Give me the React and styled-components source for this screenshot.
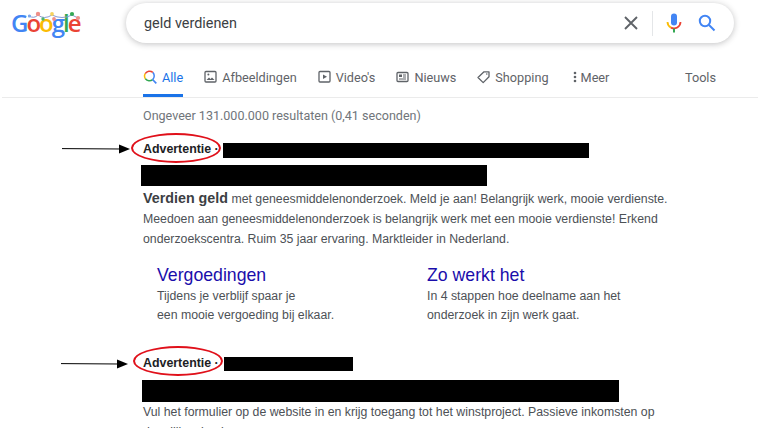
import React from "react";
import styled, { createGlobalStyle } from "styled-components";

const Global = createGlobalStyle`
  html, body { margin: 0; padding: 0; background: #fff; }
  body { font-family: "Liberation Sans", Arial, sans-serif; overflow: hidden; }
`;

const Page = styled.div`
  position: relative;
  width: 767px;
  height: 428px;
  overflow: hidden;
`;

const Header = styled.div`
  display: flex;
  align-items: flex-start;
  height: 65px;
  padding: 3px 0 0 12px;
  box-sizing: border-box;
`;

const LogoBox = styled.div`
  position: relative;
  width: 70px;
  height: 36px;
  margin-right: 44px;
  flex: none;
`;

const LogoText = styled.div`
  position: absolute;
  left: -1px;
  top: 5px;
  font-family: "Open Sans", sans-serif;
  font-size: 24px;
  line-height: 30px;
  font-weight: 600;
  letter-spacing: -2px;
  white-space: nowrap;
`;

const Letter = styled.span`
  color: ${(p) => p.$c};
`;

const Lights = styled.svg`
  position: absolute;
  left: 16px;
  top: 8px;
`;

const SearchBar = styled.div`
  display: flex;
  align-items: center;
  width: 608px;
  height: 40px;
  padding: 0 18px;
  box-sizing: border-box;
  border-radius: 20px;
  background: #fff;
  box-shadow: 0 1px 6px rgba(32, 33, 36, 0.28);
`;

const Query = styled.div`
  flex: 1;
  font-family: Roboto, sans-serif;
  font-size: 14.4px;
  color: #3c4043;
`;

const Sep = styled.div`
  width: 1px;
  height: 25px;
  margin: 0 13px 0 14px;
  background: #e4e6e8;
`;

const SearchIcon = styled.svg`
  margin-left: 16px;
`;

const Tabs = styled.div`
  display: flex;
  align-items: flex-start;
  height: 32px;
  margin: 0 9px 0 2px;
  padding-left: 141px;
  border-bottom: 1px solid #ebebeb;
  font-family: Roboto, sans-serif;
  font-size: 12.7px;
  color: #5f6368;
`;

const Tab = styled.div`
  display: flex;
  align-items: center;
  gap: ${(p) => p.$gap ?? 4}px;
  height: 32px;
  box-sizing: border-box;
  padding-top: 2px;
  padding-bottom: 7px;
  margin-right: ${(p) => p.$mr ?? 0}px;
  margin-left: ${(p) => (p.$end ? "auto" : "0")};
  color: ${(p) => (p.$active ? "#1a73e8" : "#5f6368")};
  border-bottom: 3px solid ${(p) => (p.$active ? "#1a73e8" : "transparent")};
  white-space: nowrap;
`;

const Content = styled.div`
  padding-left: 143px;
`;

const Stats = styled.div`
  margin-top: 9px;
  font-family: Roboto, sans-serif;
  font-size: 12.55px;
  line-height: 17px;
  color: #70757a;
`;

const AdRow = styled.div`
  display: flex;
  align-items: flex-start;
  height: ${(p) => p.$h}px;
  margin-top: ${(p) => p.$mt}px;
`;

const AdLabel = styled.div`
  width: ${(p) => p.$w}px;
  flex: none;
  font-size: 12.4px;
  line-height: 13px;
  font-weight: 700;
  color: #202124;
  white-space: nowrap;
`;

const Redact = styled.div`
  flex: none;
  width: ${(p) => p.$w}px;
  height: ${(p) => p.$h}px;
  margin-left: ${(p) => p.$ml ?? 0}px;
  background: #000;
`;

const Body = styled.div`
  margin-top: ${(p) => p.$mt ?? 0}px;
  width: 600px;
  font-size: 12.3px;
  line-height: 20px;
  color: #4d5156;
  white-space: nowrap;
  height: ${(p) => p.$h}px;
`;

const Strong = styled.b`
  font-size: 14.3px;
  color: #3c4043;
`;

const Sitelinks = styled.div`
  display: grid;
  grid-template-columns: 270px 270px;
  margin: 14px 0 0 14px;
  height: 82px;
`;

const SiteTitle = styled.div`
  font-size: 17.7px;
  line-height: 22px;
  color: #1a0dab;
`;

const SiteText = styled.div`
  margin-top: 1px;
  font-size: 12.3px;
  line-height: 19px;
  color: #4d5156;
  white-space: nowrap;
`;

const Ellipse = styled.div`
  position: absolute;
  left: ${(p) => p.$x}px;
  top: ${(p) => p.$y}px;
  width: 90px;
  height: 30px;
  box-sizing: border-box;
  border: 2.4px solid #e0101a;
  border-radius: 50%;
`;

const Arrow = styled.svg`
  position: absolute;
  left: ${(p) => p.$x}px;
  top: ${(p) => p.$y}px;
`;

const tabIcon = { width: 14, height: 14, viewBox: "0 0 14 14", fill: "none", stroke: "#5f6368", strokeWidth: 1.3 };

function PointerArrow({ x, y, w }) {
  return (
    <Arrow $x={x} $y={y} width={w} height="10" viewBox={`0 0 ${w} 10`}>
      <line x1="0" y1="4.6" x2={w - 8} y2="5" stroke="#000" strokeWidth="1" />
      <polygon points={`${w - 11},0.5 ${w},5 ${w - 11},9.5`} fill="#000" />
    </Arrow>
  );
}

export default function App() {
  return (
    <Page>
      <Global />
      <Header>
        <LogoBox>
          <LogoText>
            <Letter $c="#4285f4">G</Letter>
            <Letter $c="#ea4335">o</Letter>
            <Letter $c="#fbbc05">o</Letter>
            <Letter $c="#4285f4">g</Letter>
            <Letter $c="#34a853">l</Letter>
            <Letter $c="#ea4335">e</Letter>
          </LogoText>
          <Lights width="54" height="12" viewBox="0 0 54 12">
            <path d="M1 5 Q6 8 10 4 Q16 9 24 4 Q34 9 44 4 L50 7" fill="none" stroke="#8a9bd0" strokeWidth="1" />
            <circle cx="1.5" cy="5" r="1.6" fill="#7fa8ea" />
            <circle cx="10" cy="3" r="2.2" fill="#ef8f88" />
            <circle cx="15" cy="8" r="1.7" fill="#4fb56c" />
            <circle cx="24" cy="3" r="1.9" fill="#f6d25c" />
            <circle cx="26" cy="8" r="1.9" fill="#ef8f88" />
            <circle cx="44" cy="3" r="2.1" fill="#34a853" />
            <circle cx="50" cy="7" r="2.1" fill="#ef8f88" />
          </Lights>
        </LogoBox>
        <SearchBar>
          <Query>geld verdienen</Query>
          <svg width="14" height="14" viewBox="0 0 14 14" fill="none" stroke="#5f6368" strokeWidth="1.9">
            <path d="M1 1 L13 13 M13 1 L1 13" />
          </svg>
          <Sep />
          <svg width="16" height="20" viewBox="0 0 16 20" fill="none">
            <rect x="5" y="0.5" width="6" height="12" rx="3" fill="#4285f4" />
            <path d="M1.5 9 A6.5 6.5 0 0 0 5 14.6" stroke="#fbbc05" strokeWidth="1.8" />
            <path d="M5 14.6 A6.5 6.5 0 0 0 14.5 9" stroke="#ea4335" strokeWidth="1.8" />
            <rect x="7" y="15.5" width="2" height="4" fill="#34a853" />
          </svg>
          <SearchIcon width="18" height="18" viewBox="0 0 18 18" fill="none" stroke="#4285f4" strokeWidth="2">
            <circle cx="7" cy="7" r="5.2" />
            <path d="M11 11 L16.5 16.5" />
          </SearchIcon>
        </SearchBar>
      </Header>

      <Tabs>
        <Tab $active $mr={21} $gap={5}>
          <svg width="14" height="14" viewBox="0 0 14 14" fill="none" strokeWidth="1.5">
            <path d="M9.6 9.6 A5 5 0 0 0 9.8 2.4" stroke="#4285f4" />
            <path d="M9.8 2.4 A5 5 0 0 0 2.2 3.6" stroke="#ea4335" />
            <path d="M2.2 3.6 A5 5 0 0 0 2.4 8.8" stroke="#fbbc05" />
            <path d="M2.4 8.8 A5 5 0 0 0 9.6 9.6" stroke="#34a853" />
            <path d="M9.5 9.5 L13.3 13.3" stroke="#4285f4" strokeWidth="1.7" />
          </svg>
          Alle
        </Tab>
        <Tab $mr={21}>
          <svg {...tabIcon}>
            <rect x="1" y="1.5" width="11" height="10.5" rx="1" />
            <path d="M2.5 10 L5 7.5 L6.5 9 L8 7.5 L10.5 10 Z" fill="#5f6368" stroke="none" />
            <circle cx="4.4" cy="4.6" r="1" fill="#5f6368" stroke="none" />
          </svg>
          Afbeeldingen
        </Tab>
        <Tab $mr={21}>
          <svg {...tabIcon}>
            <rect x="1" y="1.5" width="11" height="10.5" rx="1" />
            <path d="M5 4.5 L9 6.8 L5 9 Z" fill="#5f6368" stroke="none" />
          </svg>
          Video's
        </Tab>
        <Tab $mr={21}>
          <svg {...tabIcon}>
            <rect x="1" y="2.5" width="11" height="9" rx="1" />
            <rect x="3" y="4.5" width="3" height="2.5" fill="#5f6368" stroke="none" />
            <path d="M7 5 H10 M7 7 H10 M3 9 H10" strokeWidth="1" />
          </svg>
          Nieuws
        </Tab>
        <Tab $mr={24}>
          <svg {...tabIcon}>
            <path d="M1 7.5 L7 1.8 H12 V6.8 L6.2 12.6 Z" strokeLinejoin="round" />
            <circle cx="9.8" cy="4" r="0.8" fill="#5f6368" stroke="none" />
          </svg>
          Shopping
        </Tab>
        <Tab $gap={4}>
          <svg width="4" height="14" viewBox="0 0 4 14" fill="#5f6368">
            <circle cx="2" cy="3" r="1.3" />
            <circle cx="2" cy="7" r="1.3" />
            <circle cx="2" cy="11" r="1.3" />
          </svg>
          Meer
        </Tab>
        <Tab $end $mr={42}>Tools</Tab>
      </Tabs>

      <Content>
        <Stats>Ongeveer 131.000.000 resultaten (0,41 seconden)</Stats>

        <AdRow $mt={19} $h={22}>
          <AdLabel $w={80}>Advertentie ·</AdLabel>
          <Redact $w={366} $h={15} />
        </AdRow>
        <Redact $ml={-2} $w={346} $h={21} />
        <Body $mt={2} $h={62}>
          <Strong>Verdien geld</Strong> met geneesmiddelenonderzoek. Meld je aan! Belangrijk werk, mooie verdienste.
          <br />
          Meedoen aan geneesmiddelenonderzoek is belangrijk werk met een mooie verdienste! Erkend
          <br />
          onderzoekscentra. Ruim 35 jaar ervaring. Marktleider in Nederland.
        </Body>

        <Sitelinks>
          <div>
            <SiteTitle>Vergoedingen</SiteTitle>
            <SiteText>
              Tijdens je verblijf spaar je
              <br />
              een mooie vergoeding bij elkaar.
            </SiteText>
          </div>
          <div>
            <SiteTitle>Zo werkt het</SiteTitle>
            <SiteText>
              In 4 stappen hoe deelname aan het
              <br />
              onderzoek in zijn werk gaat.
            </SiteText>
          </div>
        </Sitelinks>

        <AdRow $mt={11} $h={23}>
          <AdLabel $w={81}>Advertentie ·</AdLabel>
          <Redact $w={129} $h={14} />
        </AdRow>
        <Redact $ml={-1} $w={477} $h={22} />
        <Body $mt={0} $h={44}>
          Vul het formulier op de website in en krijg toegang tot het winstproject. Passieve inkomsten op
          <br />
          dagelijkse basis.
        </Body>
      </Content>

      <PointerArrow x={62} y={144} w={68} />
      <Ellipse $x={131} $y={133} />
      <PointerArrow x={61} y={359} w={67} />
      <Ellipse $x={133} $y={346} />
    </Page>
  );
}
